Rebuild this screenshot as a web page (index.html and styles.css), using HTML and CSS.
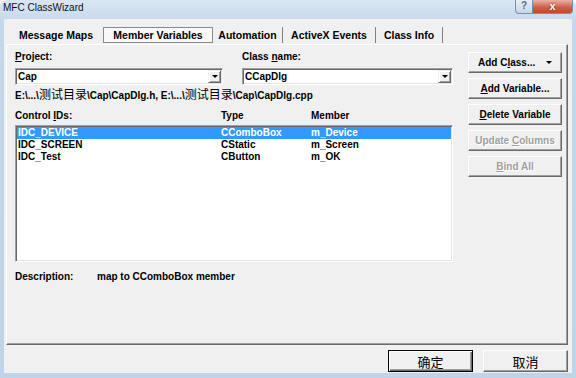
FILE: index.html
```html
<!DOCTYPE html>
<html lang="zh-CN">
<head>
    <meta charset="UTF-8">
    <title>MFC ClassWizard</title>
    <link rel="stylesheet" href="styles.css">
</head>
<body>
    <div class="window">
        <div class="titlebar">
            <span class="title">MFC ClassWizard</span>
            <div class="caption-buttons">
                <div class="cap-btn help">?</div>
                <div class="cap-btn close">x</div>
            </div>
        </div>

        <div class="client">
            <div class="tabs">
                <div class="tab tab-maps">Message Maps</div>
                <div class="tab tab-vars selected">Member Variables</div>
                <div class="tab tab-auto">Automation</div>
                <div class="tab tab-events">ActiveX Events</div>
                <div class="tab tab-info">Class Info</div>
            </div>

            <div class="panel">
                <div class="main">
                    <div class="fields">
                        <div class="field project">
                            <label><u>P</u>roject:</label>
                            <div class="combo"><span class="combo-text">Cap</span><span class="drop"></span></div>
                        </div>
                        <div class="field classname">
                            <label>Class <u>n</u>ame:</label>
                            <div class="combo"><span class="combo-text">CCapDlg</span><span class="drop"></span></div>
                        </div>
                    </div>

                    <div class="path">E:\...\<span class="cjk">测试目录</span>\Cap\CapDlg.h, E:\...\<span class="cjk">测试目录</span>\Cap\CapDlg.cpp</div>

                    <div class="cols header">
                        <span>Control <u>I</u>Ds:</span>
                        <span>Type</span>
                        <span>Member</span>
                    </div>

                    <div class="listbox">
                        <div class="row selected"><span>IDC_DEVICE</span><span>CComboBox</span><span>m_Device</span></div>
                        <div class="row"><span>IDC_SCREEN</span><span>CStatic</span><span>m_Screen</span></div>
                        <div class="row"><span>IDC_Test</span><span>CButton</span><span>m_OK</span></div>
                    </div>

                    <div class="desc">
                        <span class="desc-label">Description:</span>
                        <span>map to CComboBox member</span>
                    </div>
                </div>

                <div class="side">
                    <button class="btn">Add C<u>l</u>ass... <span class="arrow"></span></button>
                    <button class="btn"><u>A</u>dd Variable...</button>
                    <button class="btn"><u>D</u>elete Variable</button>
                    <button class="btn disabled">Update <u>C</u>olumns</button>
                    <button class="btn disabled"><u>B</u>ind All</button>
                </div>
            </div>

            <div class="footer">
                <button class="btn cjk-btn default">确定</button>
                <button class="btn cjk-btn">取消</button>
            </div>
        </div>
    </div>
</body>
</html>
```

FILE: styles.css
```css
body {
    margin: 0;
    font-family: "Liberation Sans", "Noto Sans CJK SC", sans-serif;
    font-size: 10px;
    font-weight: bold;
    color: #000;
    background: #fff;
}
.window {
    width: 576px;
    height: 378px;
    box-sizing: border-box;
    display: flex;
    flex-direction: column;
    padding: 0 4px 5px 4px;
    background: linear-gradient(#dae6f3, #c4d7ec 24px, #bfd3e9);
    border-radius: 6px 6px 0 0;
}
.titlebar {
    height: 19px;
    display: flex;
    align-items: flex-start;
    margin: 0 -4px;
    padding-left: 3px;
}
.title {
    font-weight: normal;
    font-size: 10px;
    line-height: 15px;
    color: #111;
}
.caption-buttons {
    margin-left: auto;
    margin-right: 3px;
    display: flex;
}
.cap-btn {
    height: 14px;
    box-sizing: border-box;
    border: 1px solid #7d8fa6;
    border-top: none;
    text-align: center;
    line-height: 12px;
    font-size: 10px;
}
.help {
    width: 18px;
    background: linear-gradient(#e8eff8, #c6d5e7);
    color: #5b6b80;
    border-radius: 0 0 0 4px;
}
.close {
    width: 40px;
    border-left: none;
    background: linear-gradient(#eab1a3, #d0604a 55%, #c2472f);
    color: #fff;
    font-size: 11px;
    border-radius: 0 0 4px 0;
    text-shadow: 0 0 2px #6e1a0c;
}
.client {
    flex: 1;
    display: flex;
    flex-direction: column;
    background: #f0f0f0;
    padding: 8px 4px 1px 2px;
}
.tabs {
    display: flex;
    padding-left: 3px;
    height: 16px;
    margin-bottom: 1px;
}
.tab {
    height: 16px;
    box-sizing: border-box;
    line-height: 16px;
    font-size: 10.5px;
    text-align: center;
    white-space: nowrap;
}
.tab-maps { width: 94px; }
.tab-vars { width: 110px; }
.tab-auto { width: 70px; }
.tab-events { width: 93px; }
.tab-info { width: 67px; }
.tab.selected {
    border: 1px solid #8a8a8a;
    background: #f8f8f8;
    line-height: 14px;
}
.tab.selected ~ .tab {
    border-right: 1px solid #808080;
}
.panel {
    flex: 1;
    display: flex;
    gap: 15px;
    padding: 6px 4px 0 8px;
    border-top: 1px solid #fff;
    border-left: 1px solid #fff;
    border-right: 1px solid #696969;
    border-bottom: 1px solid #696969;
    box-shadow: inset -1px -1px #a0a0a0;
}
.main {
    width: 438px;
    display: flex;
    flex-direction: column;
}
.fields {
    display: flex;
    gap: 19px;
}
.field.project {
    width: 208px;
}
.field.classname {
    flex: 1;
}
label {
    display: block;
    line-height: 12px;
    margin-bottom: 5px;
}
.combo {
    height: 17px;
    box-sizing: border-box;
    display: flex;
    align-items: center;
    padding: 1px 1px 1px 2px;
    background: #fff;
    border: 1px solid;
    border-color: #a0a0a0 #fff #fff #a0a0a0;
    box-shadow: inset 1px 1px #696969, inset -1px -1px #e3e3e3;
}
.combo-text {
    flex: 1;
    line-height: 13px;
}
.drop {
    width: 13px;
    height: 13px;
    box-sizing: border-box;
    display: flex;
    align-items: center;
    justify-content: center;
    background: #f0f0f0;
    border: 1px solid;
    border-color: #f0f0f0 #696969 #696969 #f0f0f0;
    box-shadow: inset 1px 1px #fff, inset -1px -1px #a0a0a0;
}
.drop::after,
.arrow {
    content: "";
    display: inline-block;
    border-left: 3px solid transparent;
    border-right: 3px solid transparent;
    border-top: 3px solid #000;
}
.path {
    margin-top: 3px;
    height: 12px;
    line-height: 12px;
    white-space: nowrap;
}
.cjk {
    font-family: "Noto Sans CJK SC", sans-serif;
    font-size: 12px;
    font-weight: normal;
    line-height: 12px;
}
.cols {
    display: grid;
    grid-template-columns: 206px 90px 1fr;
    line-height: 12px;
}
.header {
    margin-top: 10px;
}
.listbox {
    margin-top: 3px;
    height: 137px;
    box-sizing: border-box;
    padding: 1px;
    background: #fff;
    border: 1px solid;
    border-color: #a0a0a0 #fff #fff #a0a0a0;
    box-shadow: inset 1px 1px #696969, inset -1px -1px #e3e3e3;
}
.row {
    display: grid;
    grid-template-columns: 203px 90px 1fr;
    line-height: 12px;
    padding-left: 1px;
}
.row.selected {
    background: #3399ff;
    color: #fff;
}
.desc {
    margin-top: 9px;
    display: flex;
    line-height: 12px;
}
.desc-label {
    width: 82px;
}
.side {
    width: 94px;
    margin-top: 1px;
    display: flex;
    flex-direction: column;
    gap: 5px;
}
.btn {
    height: 21px;
    padding: 0;
    font-family: inherit;
    font-size: 10px;
    font-weight: bold;
    color: #000;
    background: #f0f0f0;
    border: 1px solid;
    border-color: #fff #696969 #696969 #fff;
    box-shadow: inset -1px -1px #a0a0a0;
    white-space: nowrap;
}
.btn .arrow {
    margin-left: 8px;
    vertical-align: 2px;
}
.btn.disabled {
    color: #a0a0a0;
    text-shadow: 1px 1px #fff;
}
.footer {
    display: flex;
    justify-content: flex-end;
    gap: 10px;
    margin-top: 5px;
}
.cjk-btn {
    width: 85px;
    height: 22px;
    font-family: "Noto Sans CJK SC", sans-serif;
    font-size: 13px;
    font-weight: normal;
}
.btn.default {
    border-color: #000;
    box-shadow: inset 1px 1px #fff, inset -1px -1px #696969, inset -2px -2px #a0a0a0;
}
```
